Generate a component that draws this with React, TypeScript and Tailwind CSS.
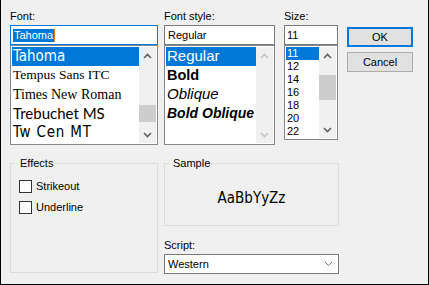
import React from "react";

const ui = { fontFamily: '"Liberation Sans", Arial, sans-serif' };

function Chevron({ up, color }: { up?: boolean; color: string }) {
  return (
    <svg width="9" height="6" viewBox="0 0 9 6">
      <path
        d={up ? "M1 5 L4.5 1.5 L8 5" : "M1 1 L4.5 4.5 L8 1"}
        fill="none"
        stroke={color}
        strokeWidth="1.6"
      />
    </svg>
  );
}

function ScrollBar({ thumbTop, thumbHeight, disabled }: { thumbTop?: number; thumbHeight?: number; disabled?: boolean }) {
  const c = disabled ? "#c4c4c4" : "#606060";
  return (
    <div className="flex w-[17px] shrink-0 flex-col bg-[#f0f0f0]">
      <div className="flex h-[17px] items-center justify-center">
        <Chevron up color={c} />
      </div>
      <div className="flex-1">
        {!disabled && (
          <div className="bg-[#cdcdcd]" style={{ marginTop: thumbTop, height: thumbHeight }} />
        )}
      </div>
      <div className="flex h-[17px] items-center justify-center">
        <Chevron color={c} />
      </div>
    </div>
  );
}

const tahoma = '"DejaVu Sans Condensed", "Liberation Sans", sans-serif';

const fonts = [
  { name: "Tahoma", cls: "text-[15px]", ff: tahoma },
  { name: "Tempus Sans ITC", cls: "text-[13.5px]", ff: '"Liberation Serif", serif' },
  { name: "Times New Roman", cls: "text-[14px]", ff: '"Liberation Serif", serif' },
  { name: "Trebuchet MS", cls: "text-[15px]", ff: 'Lato, "Liberation Sans", sans-serif' },
  { name: "Tw Cen MT", cls: "text-[15px] tracking-[0.8px]", ff: tahoma },
];

const styles = [
  { name: "Regular", cls: "text-[15px]" },
  { name: "Bold", cls: "text-[14.5px] font-bold" },
  { name: "Oblique", cls: "text-[15px] italic" },
  { name: "Bold Oblique", cls: "text-[14px] font-bold italic" },
];

const sizes = ["11", "12", "14", "16", "18", "20", "22"];

export default function App() {
  return (
    <div
      className="flex h-[285px] w-[429px] flex-col border-x border-b border-black bg-[#f0f0f0] pl-[9px] pt-[8px] text-[11px] text-black"
      style={ui}
    >
      {/* top row */}
      <div className="flex items-start">
        {/* Font */}
        <div className="flex w-[148px] flex-col">
          <div className="h-[17px] leading-[17px]">Font:</div>
          <div className="flex h-[20px] items-center border border-[#0078d7] bg-white pl-[2px]">
            <span className="bg-[#0078d7] px-[1px] leading-[13px] text-white">Tahoma</span>
            <span className="h-[13px] w-[1px] bg-[#e07a20]" />
          </div>
          <div className="flex h-[100px] border border-[#828790] bg-white p-[1px]">
            <div className="flex-1 overflow-hidden">
              {fonts.map((f, i) => (
                <div
                  key={f.name}
                  className={`flex h-[19px] items-center whitespace-nowrap pl-[1px] ${f.cls} ${i === 0 ? "bg-[#0078d7] text-white" : ""}`}
                  style={{ fontFamily: f.ff }}
                >
                  {f.name}
                </div>
              ))}
            </div>
            <ScrollBar thumbTop={41} thumbHeight={17} />
          </div>
        </div>

        {/* Font style */}
        <div className="ml-[6px] flex w-[111px] flex-col">
          <div className="h-[17px] leading-[17px]">Font style:</div>
          <div className="flex h-[20px] items-center border border-[#7a7a7a] bg-white pl-[3px]">Regular</div>
          <div className="flex h-[100px] border border-[#828790] bg-white p-[1px]">
            <div className="flex-1 overflow-hidden">
              {styles.map((s, i) => (
                <div
                  key={s.name}
                  className={`flex h-[19px] items-center whitespace-nowrap pl-[1px] ${s.cls} ${i === 0 ? "bg-[#0078d7] text-white" : ""}`}
                >
                  {s.name}
                </div>
              ))}
            </div>
            <ScrollBar disabled />
          </div>
        </div>

        {/* Size */}
        <div className="ml-[9px] flex w-[54px] flex-col">
          <div className="h-[17px] leading-[17px]">Size:</div>
          <div className="flex h-[20px] items-center border border-[#7a7a7a] bg-white pl-[2px]">11</div>
          <div className="flex h-[95px] border border-[#828790] bg-white p-[1px]">
            <div className="flex-1 overflow-hidden">
              {sizes.map((s, i) => (
                <div
                  key={s}
                  className={`flex h-[13px] items-center pl-[1px] ${i === 0 ? "bg-[#0078d7] text-white" : ""}`}
                >
                  {s}
                </div>
              ))}
            </div>
            <ScrollBar thumbTop={11} thumbHeight={25} />
          </div>
        </div>

        {/* Buttons */}
        <div className="ml-[9px] flex w-[66px] flex-col gap-[5px] pt-[19px]">
          <button className="flex h-[20px] items-center justify-center border-2 border-[#0078d7] bg-[#e1e1e1]">
            OK
          </button>
          <button className="flex h-[20px] items-center justify-center border border-[#adadad] bg-[#e1e1e1]">
            Cancel
          </button>
        </div>
      </div>

      {/* bottom row */}
      <div className="mt-[12px] flex items-start">
        <fieldset className="h-[116px] w-[148px] border border-[#dcdcdc] pl-[8px]">
          <legend className="ml-[-4px] pl-[5px] pr-[1px] leading-[13px]">Effects</legend>
          <div className="mt-[10px] flex flex-col gap-[8px]">
            <label className="flex h-[13px] items-center gap-[4px]">
              <span className="h-[13px] w-[13px] border border-[#333333] bg-white" />
              Strikeout
            </label>
            <label className="flex h-[13px] items-center gap-[4px]">
              <span className="h-[13px] w-[13px] border border-[#333333] bg-white" />
              Underline
            </label>
          </div>
        </fieldset>

        <div className="ml-[6px] flex w-[175px] flex-col">
          <fieldset className="h-[69px] border border-[#dcdcdc]">
            <legend className="ml-[4px] pl-[4px] pr-[1px] leading-[13px]">Sample</legend>
            <div className="flex h-[55px] items-center justify-center pt-[2px]">
              <span className="text-[15px]" style={{ fontFamily: tahoma }}>
                AaBbYyZz
              </span>
            </div>
          </fieldset>
          <div className="mt-[11px] h-[17px] leading-[17px]">Script:</div>
          <div className="flex h-[20px] items-center justify-between border border-[#7a7a7a] bg-white pl-[3px] pr-[5px]">
            <span>Western</span>
            <svg width="9" height="6" viewBox="0 0 9 6">
              <path d="M1 1 L4.5 4.5 L8 1" fill="none" stroke="#707070" strokeWidth="1" />
            </svg>
          </div>
        </div>
      </div>
    </div>
  );
}
